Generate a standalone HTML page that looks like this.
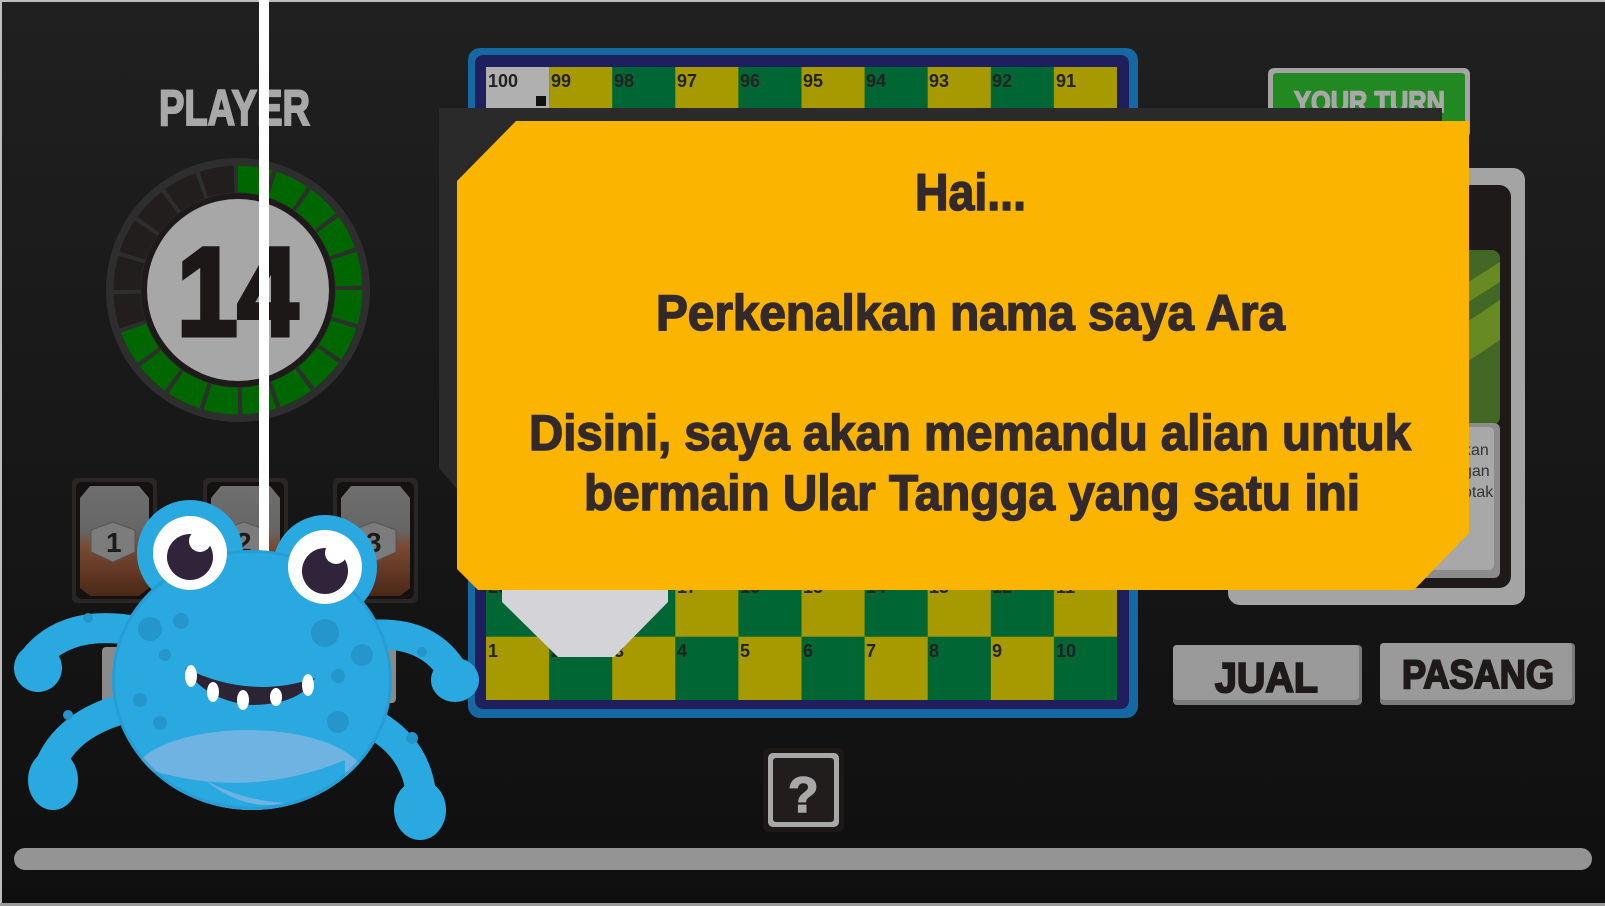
<!DOCTYPE html>
<html><head><meta charset="utf-8"><style>
html,body{margin:0;padding:0;background:#151515;}
svg{display:block;}
text{font-family:"Liberation Sans",sans-serif;font-weight:bold;}
</style></head><body>
<svg width="1605" height="906" viewBox="0 0 1605 906" xmlns="http://www.w3.org/2000/svg">
<defs>
<linearGradient id="bg" x1="0" y1="0" x2="0" y2="1"><stop offset="0" stop-color="#202020"/><stop offset="1" stop-color="#0f0f0f"/></linearGradient>
<pattern id="chk" x="486" y="67" width="126.2" height="126.6" patternUnits="userSpaceOnUse">
<rect width="126.2" height="126.6" fill="#006633"/>
<rect x="63.1" y="0" width="63.1" height="63.3" fill="#a69a00"/>
<rect x="0" y="63.3" width="63.1" height="63.3" fill="#a69a00"/>
</pattern>
<linearGradient id="cardg" x1="0" y1="0" x2="0" y2="1"><stop offset="0" stop-color="#6e6e6e"/><stop offset="0.4" stop-color="#666"/><stop offset="0.55" stop-color="#7a4a32"/><stop offset="1" stop-color="#4a2818"/></linearGradient>
<clipPath id="sector"><polygon points="238,290 238,100 430,100 430,480 48,480 48,352"/></clipPath>
<clipPath id="bodyclip"><ellipse cx="252" cy="680" rx="140" ry="130"/></clipPath>
</defs>
<rect width="1605" height="906" fill="url(#bg)"/>
<rect x="0" y="0" width="1605" height="2" fill="#bdbdbd"/>
<rect x="0" y="0" width="2" height="906" fill="#bdbdbd"/>
<rect x="0" y="903" width="1605" height="3" fill="#9a9a9a"/>

<text x="159" y="125" font-size="50" fill="#a8a8a8" stroke="#a8a8a8" stroke-width="2" textLength="151" lengthAdjust="spacingAndGlyphs">PLAYER</text>

<circle cx="238" cy="290" r="132" fill="#2e2e2e"/>
<circle cx="238" cy="290" r="111" fill="none" stroke="#221e1e" stroke-width="27" stroke-dasharray="30.86 4" transform="rotate(-90 238 290)"/>
<g clip-path="url(#sector)"><circle cx="238" cy="290" r="111" fill="none" stroke="#006600" stroke-width="27" stroke-dasharray="30.86 4" transform="rotate(-90 238 290)"/></g>
<circle cx="238" cy="290" r="97" fill="#1e1a1a"/>
<circle cx="238" cy="290" r="91" fill="#a7a7a7"/>
<text x="177" y="335" font-size="125" fill="#1c1818" stroke="#1c1818" stroke-width="5" textLength="121" lengthAdjust="spacingAndGlyphs">14</text>

<g>
<rect x="72" y="478" width="85" height="125" rx="5" fill="#2a2626"/>
<rect x="76" y="482" width="77" height="117" rx="6" fill="#151111"/>
<polygon points="90,486 139,486 149,498 149,588 139,596 90,596 80,588 80,498" fill="url(#cardg)"/>
<polygon points="113,522 135,530 135,552 113,562 91,552 91,530" fill="#7c7c7c" stroke="#555" stroke-width="1"/>
<text x="106" y="552" font-size="28" fill="#1a1a1a">1</text>
<rect x="203" y="478" width="85" height="125" rx="5" fill="#2a2626"/>
<rect x="207" y="482" width="77" height="117" rx="6" fill="#151111"/>
<polygon points="221,486 270,486 280,498 280,588 270,596 221,596 211,588 211,498" fill="url(#cardg)"/>
<polygon points="244,522 266,530 266,552 244,562 222,552 222,530" fill="#7c7c7c" stroke="#555" stroke-width="1"/>
<text x="236" y="552" font-size="28" fill="#1a1a1a">2</text>
<rect x="333" y="478" width="85" height="125" rx="5" fill="#2a2626"/>
<rect x="337" y="482" width="77" height="117" rx="6" fill="#151111"/>
<polygon points="351,486 400,486 410,498 410,588 400,596 351,596 341,588 341,498" fill="url(#cardg)"/>
<polygon points="374,522 396,530 396,552 374,562 352,552 352,530" fill="#7c7c7c" stroke="#555" stroke-width="1"/>
<text x="366" y="552" font-size="28" fill="#1a1a1a">3</text>
</g>
<rect x="102" y="647" width="294" height="56" rx="4" fill="#8a8a8a"/>

<rect x="468" y="48" width="670" height="670" rx="12" fill="#1668a2"/>
<rect x="475" y="55" width="654" height="654" rx="8" fill="#1f1f5e"/>
<rect x="486" y="67" width="631" height="633" fill="url(#chk)"/>
<rect x="486" y="67" width="63.1" height="63.3" fill="#b0b0b0"/>
<rect x="536" y="96" width="10" height="10" fill="#111"/>
<g font-size="18" fill="#222">
<text x="488" y="87">100</text><text x="551" y="87">99</text><text x="614" y="87">98</text><text x="677" y="87">97</text><text x="740" y="87">96</text><text x="803" y="87">95</text><text x="866" y="87">94</text><text x="929" y="87">93</text><text x="992" y="87">92</text><text x="1056" y="87">91</text>
<text x="488" y="593">20</text><text x="677" y="593">17</text><text x="740" y="593">16</text><text x="803" y="593">15</text><text x="866" y="593">14</text><text x="929" y="593">13</text><text x="992" y="593">12</text><text x="1056" y="593">11</text>
<text x="488" y="657">1</text><text x="551" y="657">2</text><text x="614" y="657">3</text><text x="677" y="657">4</text><text x="740" y="657">5</text><text x="803" y="657">6</text><text x="866" y="657">7</text><text x="929" y="657">8</text><text x="992" y="657">9</text><text x="1056" y="657">10</text>
</g>
<polygon points="502,585 668,585 668,602 614,657 558,657 502,602" fill="#d3d3d8"/>

<rect x="1268" y="68" width="202" height="70" rx="6" fill="#a4a4a4"/>
<rect x="1273" y="73" width="192" height="62" rx="3" fill="#228822"/>
<text x="1294" y="112" font-size="30" fill="#a8a8a8" stroke="#a8a8a8" stroke-width="1.5" textLength="151" lengthAdjust="spacingAndGlyphs">YOUR TURN</text>
<rect x="1228" y="168" width="297" height="437" rx="12" fill="#a4a4a4"/>
<rect x="1240" y="185" width="271" height="403" rx="12" fill="#1e1a1a"/>
<rect x="1250" y="250" width="250" height="175" rx="8" fill="#436724"/>
<polygon points="1440,300 1500,262 1500,282 1440,320" fill="#688a22"/>
<polygon points="1440,340 1500,300 1500,340 1440,380" fill="#688a22"/>
<rect x="1250" y="423" width="250" height="155" rx="6" fill="#8c8c8c"/>
<rect x="1254" y="427" width="240" height="143" rx="5" fill="#a8a8a8"/>
<g font-size="16" fill="#333">
<text x="1463" y="455" style="font-weight:normal">kan</text><text x="1463" y="476" style="font-weight:normal">gan</text><text x="1463" y="497" style="font-weight:normal">otak</text>
</g>
<rect x="1173" y="645" width="189" height="60" rx="4" fill="#7a7a7a"/>
<rect x="1173" y="645" width="186" height="55" rx="4" fill="#9a9a9a"/>
<text x="1215" y="692" font-size="42" fill="#1e1a1a" stroke="#1e1a1a" stroke-width="2" textLength="103" lengthAdjust="spacingAndGlyphs">JUAL</text>
<rect x="1380" y="643" width="195" height="62" rx="4" fill="#7a7a7a"/>
<rect x="1380" y="643" width="192" height="57" rx="4" fill="#9a9a9a"/>
<text x="1402" y="688" font-size="40" fill="#1e1a1a" stroke="#1e1a1a" stroke-width="2" textLength="152" lengthAdjust="spacingAndGlyphs">PASANG</text>

<rect x="763" y="748" width="81" height="84" rx="6" fill="#1c1818"/>
<rect x="768" y="753" width="71" height="74" rx="5" fill="#a8a8a8"/>
<rect x="773" y="758" width="61" height="64" rx="3" fill="#221d1d"/>
<text x="788" y="812" font-size="50" fill="#a8a8a8" stroke="#a8a8a8" stroke-width="1.5">?</text>

<rect x="14" y="848" width="1578" height="22" rx="11" fill="#949494"/>

<polygon points="439,108 1442,108 1442,300 457,489 439,468" fill="#2a2a2a"/>
<polygon points="516,121 1469,121 1469,533 1414,590 478,590 457,569 457,181" fill="#fbb400"/>
<g fill="#33292a" stroke="#33292a" stroke-width="1.5">
<text x="915" y="210" font-size="52" textLength="111" lengthAdjust="spacingAndGlyphs">Hai...</text>
<text x="656" y="330" font-size="50" textLength="629" lengthAdjust="spacingAndGlyphs">Perkenalkan nama saya Ara</text>
<text x="529" y="450" font-size="50" textLength="882" lengthAdjust="spacingAndGlyphs">Disini, saya akan memandu alian untuk</text>
<text x="584" y="510" font-size="50" textLength="776" lengthAdjust="spacingAndGlyphs">bermain Ular Tangga yang satu ini</text>
</g>

<rect x="259" y="0" width="10" height="555" fill="#ffffff"/>

<g fill="none" stroke="#29a9e0" stroke-width="30" stroke-linecap="round">
<path d="M130,630 Q60,620 30,665"/>
<path d="M140,705 Q60,720 45,780"/>
<path d="M370,635 Q430,630 455,675"/>
<path d="M365,720 Q420,745 422,805"/>
</g>
<g fill="#29a9e0">
<circle cx="38" cy="668" r="24"/>
<ellipse cx="53" cy="780" rx="25" ry="30"/>
<ellipse cx="455" cy="680" rx="24" ry="22"/>
<ellipse cx="420" cy="810" rx="26" ry="30"/>
<ellipse cx="252" cy="680" rx="140" ry="130"/>
<circle cx="190" cy="553" r="53"/>
<circle cx="325" cy="567" r="52"/>
</g>
<g clip-path="url(#bodyclip)">
<ellipse cx="248" cy="780" rx="118" ry="50" fill="#6fb3e3"/>
<path d="M150,770 Q250,800 345,760 L345,830 L150,830 Z" fill="#29a9e0"/>
<path d="M205,780 Q240,800 285,803 Q245,812 205,780 Z" fill="#6fb3e3"/>
<ellipse cx="252" cy="680" rx="140" ry="130" fill="none" stroke="#2496cc" stroke-width="6" opacity="0.6"/>
</g>
<g fill="#2496cc">
<circle cx="150" cy="629" r="12"/><circle cx="181" cy="621" r="8"/><circle cx="165" cy="655" r="6"/>
<circle cx="325" cy="633" r="14"/><circle cx="362" cy="655" r="11"/><circle cx="338" cy="676" r="7"/>
<circle cx="140" cy="700" r="7"/><circle cx="160" cy="723" r="7"/><circle cx="338" cy="722" r="11"/>
<circle cx="88" cy="618" r="5"/><circle cx="68" cy="715" r="5"/><circle cx="422" cy="652" r="5"/><circle cx="412" cy="738" r="6"/>
</g>
<circle cx="190" cy="553" r="37" fill="#fff"/>
<circle cx="325" cy="567" r="37" fill="#fff"/>
<circle cx="190" cy="557" r="23" fill="#30243a"/>
<circle cx="325" cy="571" r="23" fill="#30243a"/>
<circle cx="200" cy="541" r="11" fill="#fff"/>
<circle cx="336" cy="553" r="11" fill="#fff"/>
<path d="M185,668 Q250,700 315,678 Q300,705 250,705 Q205,700 185,668 Z" fill="#2c2434"/>
<g fill="#fff">
<ellipse cx="191" cy="676" rx="6" ry="11"/>
<ellipse cx="213" cy="692" rx="6" ry="10"/>
<ellipse cx="243" cy="700" rx="6" ry="10"/>
<ellipse cx="276" cy="697" rx="6" ry="9"/>
<ellipse cx="308" cy="685" rx="6" ry="11"/>
</g>
</svg>
</body></html>
